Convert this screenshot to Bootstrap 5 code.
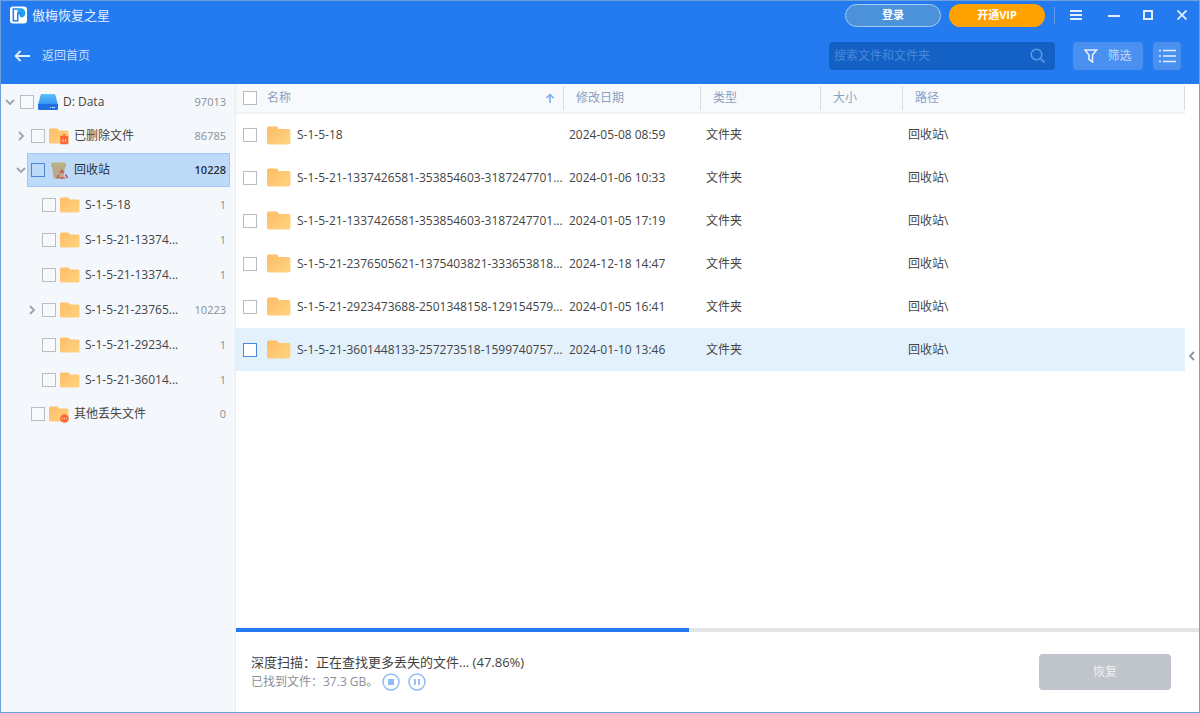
<!DOCTYPE html>
<html lang="zh-CN">
<head>
<meta charset="utf-8">
<meta name="viewport" content="width=device-width, initial-scale=1">
<title>傲梅恢复之星</title>
<link href="https://cdn.jsdelivr.net/npm/bootstrap@5.3.0/dist/css/bootstrap.min.css" rel="stylesheet">
<style>
  body { font-family: "Open Sans", "Noto Sans CJK SC", sans-serif; font-size: 12px; line-height: 16px; color: #444; }
  .app-window { border: 1px solid #6fa0dc; background: #fff; }
  .btn { font-size: 12px; line-height: 16px; }
  a { text-decoration: none; }

  /* header */
  .app-header { background: #237bef; height: 83px; color: #e3eefd; }
  .title-row { height: 28px; }
  .app-name { font-size: 13px; }
  .pill { width: 96px; height: 23px; padding: 0; border-radius: 12px; font-size: 11px; font-weight: 700; color: #fff; }
  .pill-login { background: #4b92db; border: 1px solid #a9cbf1; }
  .pill-vip { background: #ffa200; border: 0; }
  .title-rule { width: 1px; height: 17px; background: #5f9cef; margin-left: 9px; }
  .win-btn { width: 34px; height: 28px; padding: 0; border: 0; border-radius: 0; color: #e3eefd; }
  .win-menu { width: 42px; }
  .tool-row { margin-top: 12px; height: 29px; padding-right: 18px; padding-left: 13px; }
  .back-link { color: #c9defb; }
  .search-box { width: 226px; height: 28px; background: #1361c5; border-radius: 4px; }
  .search-box input { font-size: 12px; line-height: 16px; padding: 0 0 0 5px; color: #fff; }
  .search-box input::placeholder { color: #4a88d8; opacity: 1; }
  .search-box button { padding: 0 10px; border: 0; color: #5c9be8; }
  .tool-btn { background: #4990f0; color: #c3dafa; height: 28px; padding: 0; border: 0; border-radius: 4px; }
  .btn-filter { width: 70px; margin-left: 18px; gap: 9px; }
  .btn-list { width: 28px; margin-left: 10px; }

  /* ticks */
  .form-check-input.tick { width: 14px; height: 14px; margin: 0; border: 1px solid #b9bcc0; border-radius: 0; background-color: #fff; flex: none; }
  .form-check-input.tick-active { border-color: #4a86d9; }

  /* folder tree */
  .side { width: 235px; background: #f4f7fc; border-right: 1px solid #e9edf3; padding-right: 5px; padding-top: 1px; }
  .tree ul { padding-left: 11px; }
  .tree-row { height: 34px; }
  .leaf-list .tree-row { height: 35px; }
  .twisty { width: 15px; height: 20px; padding: 0 0 0 3px; border: 0; color: #9da3ad; flex: none; }
  .tree-cell { border: 1px solid transparent; padding: 0 3px; height: 100%; min-width: 0; }
  .tree-cell .tick { background-color: #f7f9fc; }
  .tree-cell svg { margin-left: 4px; margin-right: 5px; flex: none; }
  .tree-count { font-size: 11px; color: #8b8f95; }
  .tree-cell.is-current { background: #bddaf9; border-color: #9ccaf6; color: #2b2f36; }
  .is-current .tree-count { color: #2b2f36; font-weight: 600; }
  .is-current .tick { background-color: transparent; }

  /* file table */
  .file-table { table-layout: fixed; }
  .file-table th { height: 29px; padding: 0 0 0 12px; background: #f7f9fb; border-bottom: 2px solid #eff1f5; font-weight: 400; color: #8ba0c4; vertical-align: middle; }
  .file-table th .head-cell { height: 24px; border-right: 1px solid #d9dde3; }
  .head-label { padding-left: 10px; }
  .file-table td { height: 43px; padding: 0 0 0 5px; vertical-align: middle; border: 0; white-space: nowrap; overflow: hidden; }
  .file-table th:first-child, .file-table td:first-child { padding-left: 7px; }
  .file-table tbody tr:last-child td { background: #e3f1fd; }
  .file-icon { margin-left: 10px; margin-right: 6px; flex: none; }
  .panel-handle { width: 14px; padding: 0; border: 0; color: #8f98aa; }

  /* scan status */
  .scan-progress { height: 4px; border-radius: 0; background: #e3e4e6; }
  .scan-progress .progress-bar { background: #237bef; }
  .scan-foot { height: 80px; padding: 0 28px 0 15px; }
  .scan-title { font-size: 13px; line-height: 20px; color: #3f3f3f; }
  .scan-found { line-height: 20px; color: #8b8f96; }
  .round-btn { width: 18px; height: 18px; padding: 0; border: 0; color: #8fbcf9; }
  .btn-recover, .btn-recover:disabled { width: 132px; height: 36px; padding: 0; background: #c0c5cc; color: #eef0f2; border: 0; border-radius: 4px; opacity: 1; }
</style>
</head>
<body>
<svg class="position-absolute" width="0" height="0" aria-hidden="true">
  <defs>
    <linearGradient id="gold" x1="0" y1="0" x2="1" y2="1"><stop offset="0" stop-color="#ffbd66"/><stop offset="1" stop-color="#ffd381"/></linearGradient>
    <linearGradient id="disk" x1="0" y1="0" x2="0" y2="1"><stop offset="0" stop-color="#5cc0fb"/><stop offset="1" stop-color="#3294f2"/></linearGradient>
  </defs>
  <symbol id="folder" viewBox="0 0 20 16" preserveAspectRatio="none"><path d="M0 14V2Q0 0.500 1.500 0.500H8Q9 0.500 9.500 2Q9.800 2.500 10.500 2.500H18Q19.500 2.500 19.500 4V14Q19.500 15.500 18 15.500H1.500Q0 15.500 0 14Z" fill="url(#gold)"/></symbol>
  <symbol id="right" viewBox="0 0 10 10"><path d="M3 1l4 4-4 4" fill="none" stroke="currentColor" stroke-width="1.800"/></symbol>
  <symbol id="down" viewBox="0 0 10 10"><path d="M1 3l4 4 4-4" fill="none" stroke="currentColor" stroke-width="1.800"/></symbol>
</svg>

<div class="app-window d-flex flex-column vh-100 overflow-hidden">
  <header class="app-header flex-shrink-0">
    <div class="title-row d-flex align-items-center">
      <svg class="ms-2" width="19" height="18" viewBox="0 0 19 18"><rect x="1" y="0.500" width="17" height="17" rx="3" fill="#fff"/><path d="M9 3H4.300v11.700H8" fill="none" stroke="#237bef" stroke-width="1.500"/><path d="M8.500 2.300H12a4.700 4.700 0 0 1 1 9.200h-1.500V7H8.500z" fill="#22a4ec"/><path d="M8.800 15.500V7.500h2.700v3" fill="none" stroke="#237bef" stroke-width="1.500"/></svg>
      <span class="app-name ms-1">傲梅恢复之星</span>
      <button type="button" class="btn pill pill-login ms-auto">登录</button>
      <button type="button" class="btn pill pill-vip ms-2">开通VIP</button>
      <span class="title-rule"></span>
      <button type="button" class="btn win-btn win-menu d-flex align-items-center justify-content-center" aria-label="菜单"><svg width="12" height="12" viewBox="0 0 12 12"><path d="M0 2h12M0 6h12M0 10h12" stroke="currentColor" stroke-width="2"/></svg></button>
      <button type="button" class="btn win-btn d-flex align-items-center justify-content-center" aria-label="最小化"><svg width="12" height="12" viewBox="0 0 12 12"><path d="M0 7h12" stroke="currentColor" stroke-width="2"/></svg></button>
      <button type="button" class="btn win-btn d-flex align-items-center justify-content-center" aria-label="最大化"><svg width="10" height="10" viewBox="0 0 10 10"><path d="M1 1h8v8H1z" fill="none" stroke="currentColor" stroke-width="2"/></svg></button>
      <button type="button" class="btn win-btn d-flex align-items-center justify-content-center" aria-label="关闭"><svg width="10" height="10" viewBox="0 0 10 10"><path d="M0.500 0.500l9 9M9.500 0.500l-9 9" stroke="currentColor" stroke-width="1.800"/></svg></button>
    </div>
    <div class="tool-row d-flex align-items-center">
      <a href="#" class="back-link d-flex align-items-center me-auto"><svg class="me-2" width="16" height="12" viewBox="0 0 16 12"><path d="M6.500 1L1.500 6l5 5M2 6h14" fill="none" stroke="#e3eefd" stroke-width="1.800"/></svg><span class="ms-1">返回首页</span></a>
      <div class="search-box d-flex align-items-center">
        <input type="search" class="form-control bg-transparent border-0" placeholder="搜索文件和文件夹" aria-label="搜索文件和文件夹">
        <button type="button" class="btn d-flex" aria-label="搜索"><svg width="15" height="15" viewBox="0 0 15 15"><circle cx="6.500" cy="6.500" r="5.300" fill="none" stroke="currentColor" stroke-width="1.500"/><path d="M10.500 10.500l4 4" stroke="currentColor" stroke-width="1.700"/></svg></button>
      </div>
      <button type="button" class="btn tool-btn btn-filter d-flex align-items-center justify-content-center"><svg width="14" height="14" viewBox="0 0 14 14"><path d="M1 1h11.500L8.500 6v7L5 10.500V6z" fill="none" stroke="#e3eefd" stroke-width="1.600"/></svg>筛选</button>
      <button type="button" class="btn tool-btn btn-list d-flex align-items-center justify-content-center" aria-label="列表视图"><svg width="17" height="14" viewBox="0 0 17 14"><path d="M0 1.500h2m2 0h13M0 7h2m2 0h13M0 12.500h2m2 0h13" stroke="#e3eefd" stroke-width="1.700"/></svg></button>
    </div>
  </header>

  <div class="d-flex flex-fill overflow-hidden">
    <aside class="side flex-shrink-0">
      <ul class="tree list-unstyled mb-0">
        <li>
          <div class="tree-row d-flex align-items-center">
            <button type="button" class="btn twisty d-flex align-items-center justify-content-center" aria-label="折叠"><svg width="10" height="10"><use href="#down"/></svg></button>
            <label class="tree-cell d-flex align-items-center flex-fill"><input type="checkbox" class="form-check-input tick"><svg width="20" height="18" viewBox="0 0 20 18"><path d="M4 1h12q1 0 1.400 1L20 12H0L2.600 2Q3 1 4 1z" fill="url(#disk)"/><path d="M0 11h20v4.500q0 1.500-1.500 1.500h-17Q0 17 0 15.500z" fill="#1f6fe3"/><path d="M12 14.500h1m1 0h3" stroke="#c8e0ff"/></svg><span class="flex-fill">D: Data</span><span class="tree-count">97013</span></label>
          </div>
          <ul class="list-unstyled">
            <li class="tree-row d-flex align-items-center">
              <button type="button" class="btn twisty d-flex align-items-center justify-content-center" aria-label="展开"><svg width="10" height="10"><use href="#right"/></svg></button>
              <label class="tree-cell d-flex align-items-center flex-fill"><input type="checkbox" class="form-check-input tick"><svg width="20" height="18" viewBox="0 0 20 18"><use href="#folder" width="20" height="16" y="1"/><path d="M11 9.500h8.500M12 10.500h6.500V16.500h-6.500z" fill="#ff6633" stroke="#ff6633" stroke-width="1.500"/><path d="M14 7.800h2.500" stroke="#ff6633" stroke-width="1.500"/><path d="M14 12v3m2.500-3v3" stroke="#ffd0b8"/></svg><span class="flex-fill">已删除文件</span><span class="tree-count">86785</span></label>
            </li>
            <li>
              <div class="tree-row d-flex align-items-center">
                <button type="button" class="btn twisty d-flex align-items-center justify-content-center" aria-label="折叠"><svg width="10" height="10"><use href="#down"/></svg></button>
                <label class="tree-cell is-current d-flex align-items-center flex-fill"><input type="checkbox" class="form-check-input tick tick-active"><svg width="20" height="18" viewBox="0 0 20 18"><path d="M3 5h13l-1.500 11q-.2 1.500-1.500 1.500H6Q4.700 17.500 4.500 16z" fill="#bbaa89"/><path d="M3.500 1.500h12q1 0 1 1l.8 3.500H2L2.600 2.500q0-1 .9-1z" fill="#b9b083"/><path d="M8 17.500l2-3.500M11 12l2-2.500 2 2.500M16.500 13.500l2 3.500M10.500 17H16" fill="none" stroke="#c05a5c" stroke-width="1.700"/></svg><span class="flex-fill">回收站</span><span class="tree-count">10228</span></label>
              </div>
              <ul class="list-unstyled leaf-list">
                <li class="tree-row d-flex align-items-center"><span class="twisty"></span><label class="tree-cell d-flex align-items-center flex-fill"><input type="checkbox" class="form-check-input tick"><svg width="20" height="16"><use href="#folder"/></svg><span class="flex-fill">S-1-5-18</span><span class="tree-count">1</span></label></li>
                <li class="tree-row d-flex align-items-center"><span class="twisty"></span><label class="tree-cell d-flex align-items-center flex-fill"><input type="checkbox" class="form-check-input tick"><svg width="20" height="16"><use href="#folder"/></svg><span class="flex-fill">S-1-5-21-13374...</span><span class="tree-count">1</span></label></li>
                <li class="tree-row d-flex align-items-center"><span class="twisty"></span><label class="tree-cell d-flex align-items-center flex-fill"><input type="checkbox" class="form-check-input tick"><svg width="20" height="16"><use href="#folder"/></svg><span class="flex-fill">S-1-5-21-13374...</span><span class="tree-count">1</span></label></li>
                <li class="tree-row d-flex align-items-center"><button type="button" class="btn twisty d-flex align-items-center justify-content-center" aria-label="展开"><svg width="10" height="10"><use href="#right"/></svg></button><label class="tree-cell d-flex align-items-center flex-fill"><input type="checkbox" class="form-check-input tick"><svg width="20" height="16"><use href="#folder"/></svg><span class="flex-fill">S-1-5-21-23765...</span><span class="tree-count">10223</span></label></li>
                <li class="tree-row d-flex align-items-center"><span class="twisty"></span><label class="tree-cell d-flex align-items-center flex-fill"><input type="checkbox" class="form-check-input tick"><svg width="20" height="16"><use href="#folder"/></svg><span class="flex-fill">S-1-5-21-29234...</span><span class="tree-count">1</span></label></li>
                <li class="tree-row d-flex align-items-center"><span class="twisty"></span><label class="tree-cell d-flex align-items-center flex-fill"><input type="checkbox" class="form-check-input tick"><svg width="20" height="16"><use href="#folder"/></svg><span class="flex-fill">S-1-5-21-36014...</span><span class="tree-count">1</span></label></li>
              </ul>
            </li>
            <li class="tree-row d-flex align-items-center">
              <span class="twisty"></span>
              <label class="tree-cell d-flex align-items-center flex-fill"><input type="checkbox" class="form-check-input tick"><svg width="20" height="18" viewBox="0 0 20 18"><use href="#folder" width="20" height="16" y="1"/><circle cx="15.500" cy="13.500" r="4.300" fill="#ff6a35"/><path d="M13 13.500h1m1 0h1m1 0h1" stroke="#ffd9c6"/></svg><span class="flex-fill">其他丢失文件</span><span class="tree-count">0</span></label>
            </li>
          </ul>
        </li>
      </ul>
    </aside>

    <main class="d-flex flex-column flex-fill overflow-hidden">
      <div class="d-flex flex-fill overflow-hidden">
        <div class="flex-fill">
          <table class="file-table w-100">
            <colgroup><col style="width:328px"><col style="width:137px"><col style="width:120px"><col style="width:82px"><col></colgroup>
            <thead>
              <tr>
                <th scope="col"><div class="head-cell d-flex align-items-center"><input type="checkbox" class="form-check-input tick" id="all"><label for="all" class="head-label flex-fill">名称</label><svg class="me-2" width="10" height="10" viewBox="0 0 10 10"><path d="M5 10V1.500M1.500 5L5 1.500 8.500 5" fill="none" stroke="#7fb0ee" stroke-width="1.700"/></svg></div></th>
                <th scope="col"><div class="head-cell d-flex align-items-center">修改日期</div></th>
                <th scope="col"><div class="head-cell d-flex align-items-center">类型</div></th>
                <th scope="col"><div class="head-cell d-flex align-items-center">大小</div></th>
                <th scope="col"><div class="head-cell d-flex align-items-center">路径</div></th>
              </tr>
            </thead>
            <tbody>
              <tr><td><label class="d-flex align-items-center"><input type="checkbox" class="form-check-input tick"><svg class="file-icon" width="24" height="19"><use href="#folder"/></svg>S-1-5-18</label></td><td>2024-05-08 08:59</td><td>文件夹</td><td></td><td>回收站\</td></tr>
              <tr><td><label class="d-flex align-items-center"><input type="checkbox" class="form-check-input tick"><svg class="file-icon" width="24" height="19"><use href="#folder"/></svg>S-1-5-21-1337426581-353854603-3187247701...</label></td><td>2024-01-06 10:33</td><td>文件夹</td><td></td><td>回收站\</td></tr>
              <tr><td><label class="d-flex align-items-center"><input type="checkbox" class="form-check-input tick"><svg class="file-icon" width="24" height="19"><use href="#folder"/></svg>S-1-5-21-1337426581-353854603-3187247701...</label></td><td>2024-01-05 17:19</td><td>文件夹</td><td></td><td>回收站\</td></tr>
              <tr><td><label class="d-flex align-items-center"><input type="checkbox" class="form-check-input tick"><svg class="file-icon" width="24" height="19"><use href="#folder"/></svg>S-1-5-21-2376505621-1375403821-333653818...</label></td><td>2024-12-18 14:47</td><td>文件夹</td><td></td><td>回收站\</td></tr>
              <tr><td><label class="d-flex align-items-center"><input type="checkbox" class="form-check-input tick"><svg class="file-icon" width="24" height="19"><use href="#folder"/></svg>S-1-5-21-2923473688-2501348158-129154579...</label></td><td>2024-01-05 16:41</td><td>文件夹</td><td></td><td>回收站\</td></tr>
              <tr><td><label class="d-flex align-items-center"><input type="checkbox" class="form-check-input tick tick-active"><svg class="file-icon" width="24" height="19"><use href="#folder"/></svg>S-1-5-21-3601448133-257273518-1599740757...</label></td><td>2024-01-10 13:46</td><td>文件夹</td><td></td><td>回收站\</td></tr>
            </tbody>
          </table>
        </div>
        <button type="button" class="btn panel-handle d-flex align-items-center justify-content-center flex-shrink-0" aria-label="展开面板"><svg width="8" height="10" viewBox="0 0 8 10"><path d="M6 1L2 5l4 4" fill="none" stroke="currentColor" stroke-width="2"/></svg></button>
      </div>
      <div class="progress scan-progress flex-shrink-0" role="progressbar" aria-label="扫描进度" aria-valuenow="47" aria-valuemin="0" aria-valuemax="100"><div class="progress-bar" style="width:47%"></div></div>
      <footer class="scan-foot d-flex align-items-center justify-content-between flex-shrink-0">
        <div>
          <div class="scan-title">深度扫描：正在查找更多丢失的文件... (47.86%)</div>
          <div class="scan-found d-flex align-items-center">
            <span>已找到文件：37.3 GB。</span>
            <button type="button" class="btn round-btn d-flex ms-1" aria-label="停止"><svg width="18" height="18" viewBox="0 0 18 18"><circle cx="9" cy="9" r="8" fill="none" stroke="currentColor" stroke-width="1.500"/><path d="M6 6h6v6H6z" fill="currentColor"/></svg></button>
            <button type="button" class="btn round-btn d-flex ms-2" aria-label="暂停"><svg width="18" height="18" viewBox="0 0 18 18"><circle cx="9" cy="9" r="8" fill="none" stroke="currentColor" stroke-width="1.500"/><path d="M7 6v6m4-6v6" stroke="currentColor" stroke-width="1.800"/></svg></button>
          </div>
        </div>
        <button type="button" class="btn btn-recover" disabled>恢复</button>
      </footer>
    </main>
  </div>
</div>
<script src="https://cdn.jsdelivr.net/npm/bootstrap@5.3.0/dist/js/bootstrap.bundle.min.js"></script>
</body>
</html>
